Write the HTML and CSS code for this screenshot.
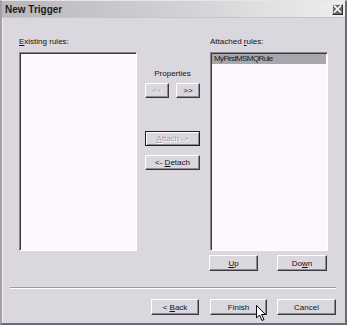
FILE: index.html
```html
<!DOCTYPE html>
<html lang="en">
<head>
    <meta charset="UTF-8">
    <title>New Trigger</title>
    <link rel="stylesheet" href="styles.css">
</head>
<body>
    <div class="window">
        <!-- Title bar -->
        <div class="titlebar">
            <span class="title">New Trigger</span>
            <span class="close">
                <svg width="9" height="8" viewBox="0 0 9 8"><path d="M1 0.5 L8 7.5 M8 0.5 L1 7.5" stroke="#fff" stroke-width="1.6"/></svg>
            </span>
        </div>

        <!-- Rules panel -->
        <div class="panel">
            <div class="column">
                <div class="label"><u>E</u>xisting rules:</div>
                <div class="listbox"></div>
            </div>

            <div class="middle">
                <div class="props-label">Properties</div>
                <div class="props-row">
                    <button class="btn small" disabled>&lt;&lt;</button>
                    <button class="btn small">&gt;&gt;</button>
                </div>
                <button class="btn wide default" disabled><u>A</u>ttach -&gt;</button>
                <button class="btn wide">&lt;- <u>D</u>etach</button>
            </div>

            <div class="column">
                <div class="label">Attached <u>r</u>ules:</div>
                <div class="listbox">
                    <div class="item selected">MyFirstMSMQRule</div>
                </div>
                <div class="order-row">
                    <button class="btn up"><u>U</u>p</button>
                    <button class="btn down">Do<u>w</u>n</button>
                </div>
            </div>
        </div>

        <div class="separator"></div>

        <!-- Wizard buttons -->
        <div class="footer">
            <button class="btn back">&lt; <u>B</u>ack</button>
            <button class="btn finish">Finish</button>
            <button class="btn cancel">Cancel</button>
        </div>

        <!-- Mouse pointer -->
        <svg class="cursor" width="11" height="17" viewBox="0 0 11 17">
            <path d="M0.5 0.5 L0.5 13 L3.5 10 L6 15.5 L8 14.5 L5.5 9.5 L9.5 9.5 Z" fill="#fff" stroke="#000" stroke-width="1"/>
        </svg>
    </div>
</body>
</html>
```

FILE: styles.css
```css
/* General Styling */
body {
    margin: 0;
    padding: 0;
    background-color: #ffffff;
    font-family: 'Liberation Sans', Arial, sans-serif;
    font-size: 8px;
    color: #111111;
}

/* Dialog frame */
.window {
    position: relative;
    width: 347px;
    height: 325px;
    box-sizing: border-box;
    background-color: #dbd7df;
    border-top: 1px solid #e6e6e6;
    border-left: 2px solid #a39fa7;
    border-right: 2px solid #6e6a72;
    border-bottom: 2px solid #6e6a72;
    box-shadow: inset 1px 0 0 #f2eef4;
}

.titlebar {
    height: 16px;
    display: flex;
    align-items: center;
    justify-content: space-between;
    padding: 0 2px 0 3px;
    background: linear-gradient(to right, #b9b7bb, #d4d2d6 55%, #eeeeee);
    border-bottom: 1px solid #c8c4cc;
}

.title {
    font-weight: bold;
    font-size: 10px;
    color: #1c1c1c;
}

.close {
    width: 11px;
    height: 11px;
    box-sizing: border-box;
    display: flex;
    align-items: center;
    justify-content: center;
    background-color: #6b6b6f;
    border: 1px solid;
    border-color: #e0e0e0 #303030 #303030 #e0e0e0;
}

/* Rules panel */
.panel {
    display: flex;
    padding: 18px 0 0 17px;
}

.column {
    display: flex;
    flex-direction: column;
}

.label {
    height: 11px;
    line-height: 11px;
    margin-bottom: 5px;
}

.listbox {
    width: 118px;
    height: 199px;
    box-sizing: border-box;
    background-color: #fdf8fd;
    border: 1px solid;
    border-color: #8a868e #ffffff #ffffff #8a868e;
    box-shadow: inset 1px 1px 0 #3a383c;
    padding: 1px 1px;
}

.item {
    height: 10px;
    line-height: 10px;
    padding-left: 2px;
    letter-spacing: -0.6px;
}

.item.selected {
    background-color: #a9a7ad;
    color: #1a1a1a;
}

.middle {
    width: 55px;
    display: flex;
    flex-direction: column;
    align-items: center;
    margin: 0 10px 0 8px;
    padding-top: 32px;
}

.props-label {
    height: 11px;
    line-height: 11px;
}

.props-row {
    width: 100%;
    display: flex;
    justify-content: space-between;
    margin-top: 4px;
}

/* Buttons */
.btn {
    font-family: 'Liberation Sans', Arial, sans-serif;
    font-size: 8px;
    color: #111111;
    height: 16px;
    padding: 0;
    box-sizing: border-box;
    background-color: #dbd7df;
    border: 1px solid;
    border-color: #ffffff #3a383c #3a383c #ffffff;
    box-shadow: inset -1px -1px 0 #8e8a92;
}

.btn:disabled {
    color: #a29ea6;
    text-shadow: 1px 1px 0 #ffffff;
}

.btn.small {
    width: 24px;
    height: 15px;
}

.btn.wide {
    width: 55px;
    height: 15px;
}

.btn.default {
    margin-top: 33px;
    border-color: #1e1e1e;
    box-shadow: inset 1px 1px 0 #ffffff, inset -1px -1px 0 #8e8a92;
}

.btn.wide + .btn.wide {
    margin-top: 9px;
}

.order-row {
    display: flex;
    justify-content: space-between;
    width: 118px;
    margin: 4px 0 0 -1px;
}

.btn.up {
    width: 49px;
}

.btn.down {
    width: 50px;
}

.separator {
    margin: 16px 9px 0 8px;
    height: 0;
    border-top: 1px solid #9c98a0;
    border-bottom: 1px solid #ffffff;
}

/* Wizard footer */
.footer {
    display: flex;
    justify-content: flex-end;
    gap: 10px;
    padding: 10px 9px 0 0;
}

.btn.back {
    width: 48px;
    margin-right: 1px;
}

.btn.finish {
    width: 57px;
}

.btn.cancel {
    width: 59px;
}

/* Pointer sits over the Finish button */
.cursor {
    position: absolute;
    left: 254px;
    top: 304px;
}
```
